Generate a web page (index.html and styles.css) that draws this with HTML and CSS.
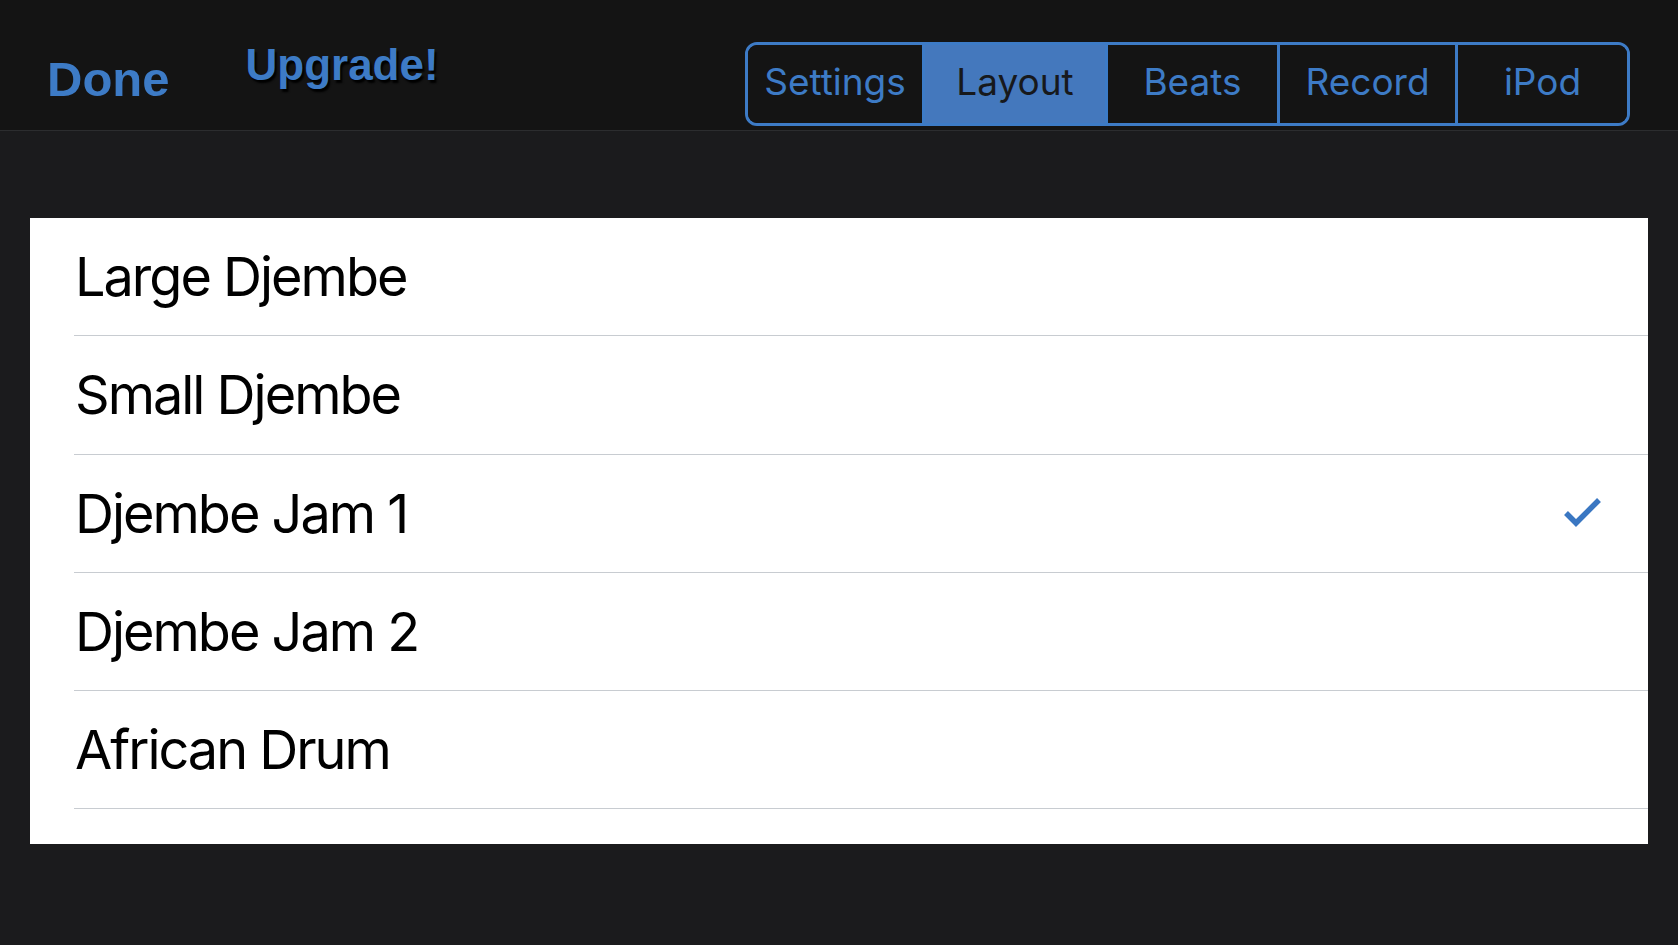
FILE: index.html
```html
<!DOCTYPE html>
<html lang="en">
<head>
<meta charset="utf-8">
<title>Layout</title>
<link rel="stylesheet" href="styles.css">
</head>
<body>
<header class="topbar">
  <span class="done">Done</span>
  <span class="upgrade">Upgrade!</span>
  <nav class="segmented">
    <span class="seg seg-settings">Settings</span>
    <span class="seg seg-layout seg-active">Layout</span>
    <span class="seg seg-beats">Beats</span>
    <span class="seg seg-record">Record</span>
    <span class="seg seg-ipod">iPod</span>
  </nav>
</header>
<main class="content">
  <ul class="list">
    <li class="row"><span class="label">Large Djembe</span></li>
    <li class="row"><span class="label">Small Djembe</span></li>
    <li class="row"><span class="label">Djembe Jam 1</span>
      <svg class="check" width="40" height="32" viewBox="0 0 40 32"><polyline points="4,16 14,26 37,3" fill="none" stroke="#3a77c2" stroke-width="5.5" stroke-linecap="butt" stroke-linejoin="miter"/></svg>
    </li>
    <li class="row"><span class="label">Djembe Jam 2</span></li>
    <li class="row"><span class="label">African Drum</span></li>
  </ul>
</main>
</body>
</html>
```
FILE: styles.css
```css
html, body {
  margin: 0;
  padding: 0;
}
body {
  background: #1b1b1d;
  width: 1678px;
  height: 945px;
  overflow: hidden;
}
.topbar {
  display: flex;
  align-items: flex-start;
  height: 130px;
  background: #141414;
  border-bottom: 1px solid #2c2d2f;
  padding-left: 47px;
  box-sizing: content-box;
}
.done {
  font-family: "Liberation Sans", Arial, sans-serif;
  font-weight: bold;
  font-size: 49px;
  line-height: 49px;
  color: #3d7bc6;
  margin-top: 55px;
}
.upgrade {
  font-family: "Liberation Sans", Arial, sans-serif;
  font-weight: bold;
  font-size: 44px;
  line-height: 44px;
  color: #3d7bc6;
  margin-top: 43px;
  margin-left: 76px;
  text-shadow: 2px 3px 2px #000;
}
.segmented {
  display: flex;
  margin-left: auto;
  margin-right: 48px;
  margin-top: 42px;
  width: 885px;
  height: 84px;
  box-sizing: border-box;
  border: 3px solid #3d7bc6;
  border-radius: 12px;
  overflow: hidden;
}
.seg {
  display: flex;
  align-items: center;
  justify-content: center;
  padding-bottom: 5px;
  box-sizing: border-box;
  font-family: Inter, "Noto Sans", sans-serif;
  font-size: 37px;
  color: #3d7bc6;
  background: #141414;
}
.seg + .seg {
  border-left: 3px solid #3d7bc6;
}
.seg-settings { flex: 0 0 174px; }
.seg-layout { flex: 0 0 183px; }
.seg-beats { flex: 0 0 172px; }
.seg-record { flex: 0 0 178px; }
.seg-ipod { flex: 1 1 auto; }
.seg-active {
  background: #4478bd;
  color: #17191c;
}
.content {
  padding-top: 87px;
  padding-left: 30px;
}
.list {
  list-style: none;
  margin: 0;
  padding: 0 0 35px 0;
  width: 1618px;
  background: #ffffff;
}
.row {
  display: flex;
  align-items: center;
  justify-content: space-between;
  height: 117.3px;
  margin-left: 44px;
  padding-right: 46px;
  border-bottom: 1px solid #c8ccd1;
}
.label {
  font-family: Inter, "Noto Sans", sans-serif;
  font-size: 54px;
  color: #000;
  letter-spacing: -2px;
  padding-left: 1px;
}
.check {
  display: block;
}
```
